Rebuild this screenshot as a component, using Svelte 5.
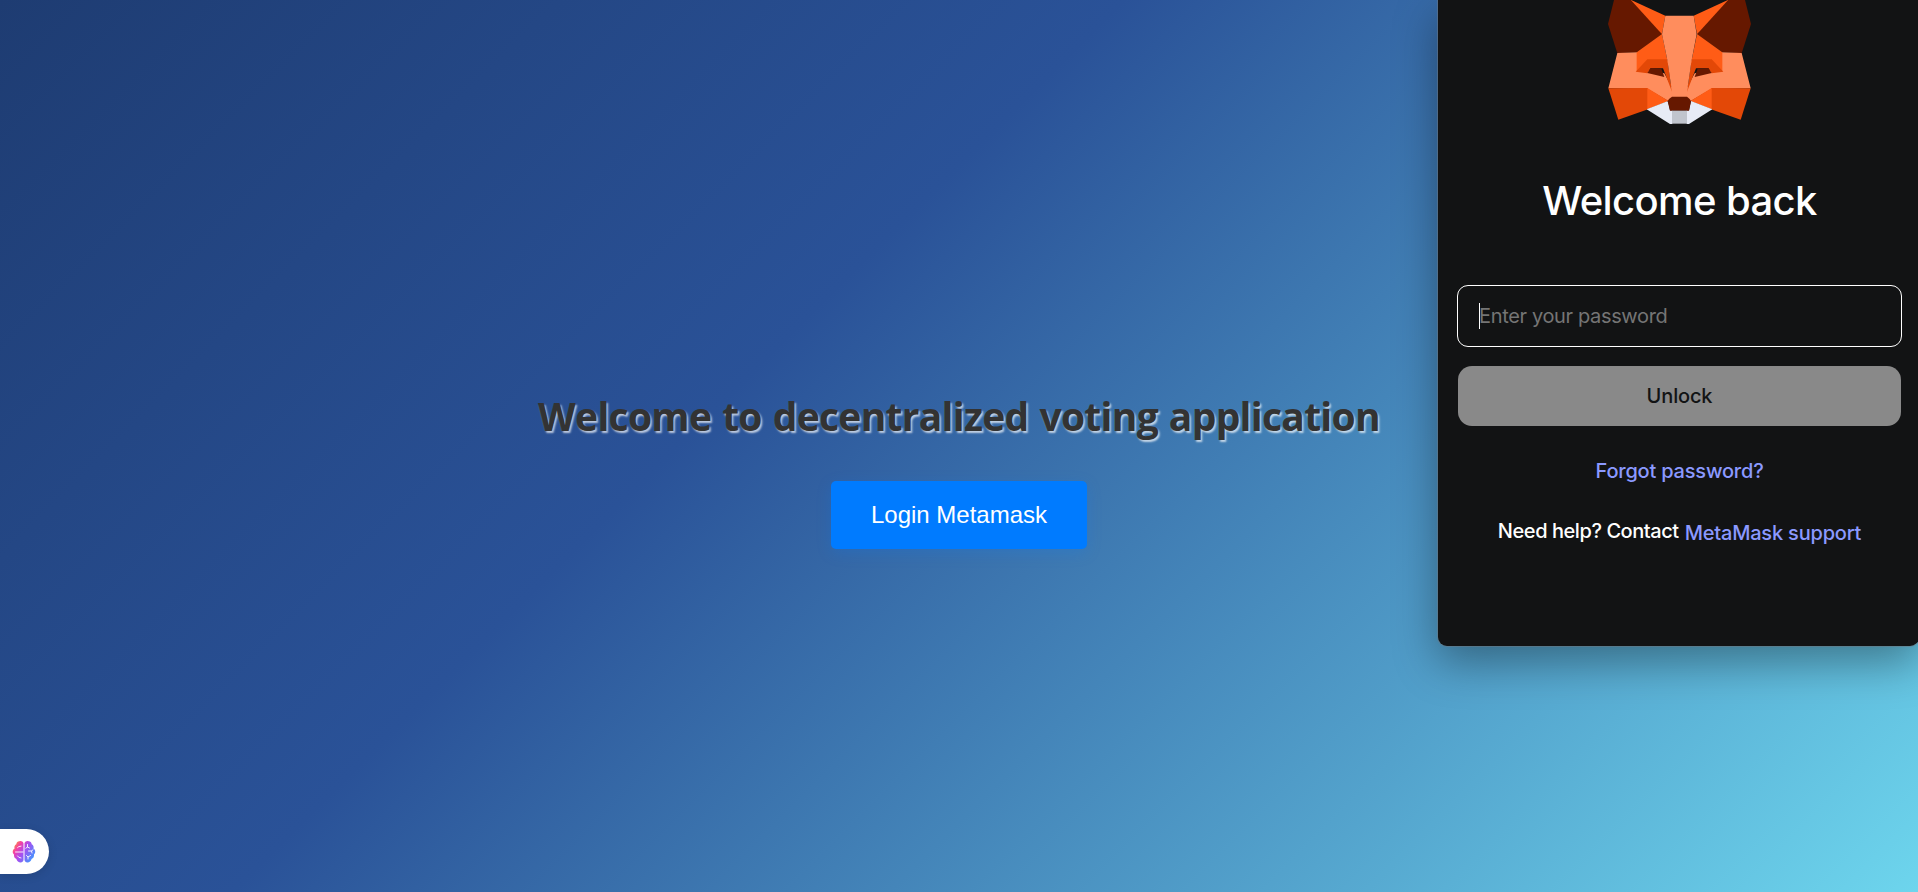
<script>
  let password = $state('');

  // Left half of the mask; the right half is its mirror image across x = 268.5.
  const half = [
    { fill: '#ff5c16', d: 'M119 -2 L226 47 L216 103 L119 20Z' },
    { fill: '#661800', d: 'M73 -4 L119 -4 L216 103 L140 157 L82 160 L54 72Z' },
    { fill: '#ff8d5d', d: 'M82 159 L141 157 L141 213 L172 210 L223 220 L250 270 L250 296 L236 304 L172 266 L55 265Z' },
    { fill: '#ff5c16', d: 'M216 102 L232 180 L236 190 L180 180 L140 214 L140 157Z' },
    { fill: '#e34807', d: 'M172 178 L232 178 L246 275 L219 205 L182 205 L172 220 L137 215Z' },
    { fill: '#661800', d: 'M182 204 L214 206 L223 231 L172 219Z' },
    { fill: '#e34807', d: 'M55 265 L174 264 L174 328 L85 359Z' },
    { fill: '#ff5c16', d: 'M172 264 L236 303 L172 328Z' },
    { fill: '#e7ebf6', d: 'M170 328 L234 303 L240 331 L247 331 L247 372 L240 372Z' },
  ];
</script>

<main class="page">
  <h1>Welcome to decentralized voting application</h1>
  <button class="login">Login Metamask</button>

  <aside class="assistant" aria-label="Assistant">
    <svg width="24" height="24" viewBox="0 0 24 24">
      <defs>
        <linearGradient id="brain" x1="0" y1="0.1" x2="1" y2="0.75">
          <stop offset="0" stop-color="#ffa81f" />
          <stop offset="0.25" stop-color="#f43fa6" />
          <stop offset="0.5" stop-color="#a94df0" />
          <stop offset="1" stop-color="#3b9bff" />
        </linearGradient>
      </defs>
      <path
        fill="url(#brain)"
        d="M11.500 3.200C11 1.500 8.800.700 7.500 1.300C6.200 1.100 4.400 2.200 4.300 4.200C2.500 5 2 7 2.600 8.500C.4 9.800.1 12.900 2 14.500C1.700 16.800 2.800 18.500 4.400 18.900C5 21.300 6.800 22.500 8.700 22.400C10.200 22.400 11.200 21.300 11.500 20Z M12.500 3.200C13 1.500 15.200.700 16.500 1.300C17.800 1.100 19.600 2.200 19.700 4.200C21.500 5 22 7 21.400 8.500C23.600 9.800 23.900 12.900 22 14.500C22.300 16.800 21.200 18.500 19.600 18.900C19 21.300 17.200 22.500 15.300 22.400C13.800 22.400 12.800 21.300 12.500 20Z"
      />
      <path
        fill="none"
        stroke="#fff"
        stroke-width="0.9"
        stroke-linecap="round"
        d="M5.500 7.500Q6.300 6.200 9 6.100 M3.500 12H11 M5.500 16Q6.500 18 9 18 M15.500 4.500V7L13.800 8.200 M15.500 7L17.500 8 M16.500 11H19.500L21 9.800 M19.500 11L20 13 M14.500 15.500L16 17L18.500 15.500 M16 17V19"
      />
    </svg>
  </aside>

  <section class="wallet">
    <svg class="fox" width="180" height="135" viewBox="0 0 540 405">
      {#each half as p}<path d={p.d} fill={p.fill} />{/each}
      <g transform="translate(537 0) scale(-1 1)">
        {#each half as p}<path d={p.d} fill={p.fill} />{/each}
      </g>
      <path fill="#ff8d5d" d="M226 47H311L320 103L305 180L291 275L292 292H245L246 275L232 180L216 103Z" />
      <path fill="#661800" d="M246 290H291L299 297L303 304L297 332H240L233 304L237 297Z" />
      <path fill="#c0c4cd" d="M246 332H291V371H246Z" />
    </svg>
    <h2>Welcome back</h2>
    <label class="field">
      <span class="caret"></span>
      <input type="password" placeholder="Enter your password" bind:value={password} />
    </label>
    <button class="unlock" disabled>Unlock</button>
    <a class="forgot" href="#forgot">Forgot password?</a>
    <p class="help"><span>Need help? Contact</span><a href="#support">MetaMask support</a></p>
  </section>
</main>

<style>
  :global(body) {
    margin: 0;
    overflow: hidden;
  }
  .page {
    position: relative;
    height: 892px;
    box-sizing: border-box;
    overflow: hidden;
    display: flex;
    flex-direction: column;
    align-items: center;
    justify-content: center;
    background: linear-gradient(135deg, #1e3c72, #2a5298 40%, #6dd5ed);
  }
  h1 {
    margin: 45px 0 38px;
    font: 700 39px/54px 'Open Sans', sans-serif;
    letter-spacing: -0.72px;
    word-spacing: 1.500px;
    color: #333;
    text-shadow: 1.500px 1.500px 2px rgba(255, 255, 255, 0.7);
    white-space: nowrap;
  }
  .login {
    width: 256px;
    height: 68px;
    padding: 0;
    border: 0;
    border-radius: 5px;
    background: #007bff;
    color: #fff;
    font: 24px 'Liberation Sans', Arial, sans-serif;
    box-shadow: 0 4px 15px rgba(0, 123, 255, 0.2);
  }
  .assistant {
    position: absolute;
    left: 0;
    top: 829px;
    width: 49px;
    height: 45px;
    box-sizing: border-box;
    padding: 10.500px 0 0 12px;
    border-radius: 0 22.500px 22.500px 0;
    background: #fff;
    box-shadow: 0 2px 10px rgba(0, 0, 0, 0.12);
  }
  .assistant svg {
    display: block;
  }
  .wallet {
    position: absolute;
    top: 0;
    right: -1px;
    width: 481px;
    height: 646px;
    box-sizing: border-box;
    padding: 0 17px 0 19px;
    border-radius: 0 0 9px 9px;
    background: #121314;
    box-shadow:
      0 0 0 1px rgba(110, 120, 130, 0.5),
      0 16px 44px rgba(0, 0, 0, 0.36);
    display: flex;
    flex-direction: column;
    align-items: center;
    font-family: Inter, sans-serif;
    color: #fff;
  }
  .fox {
    display: block;
    flex: none;
    margin-left: 1px;
  }
  h2 {
    margin: 41px 0 0;
    font-size: 40px;
    line-height: 50px;
    font-weight: 500;
    letter-spacing: -0.6px;
  }
  .field {
    align-self: stretch;
    height: 62px;
    box-sizing: border-box;
    margin-top: 59px;
    padding-left: 21px;
    border: 1px solid #fff;
    border-radius: 11px;
    display: flex;
    align-items: center;
  }
  .caret {
    width: 1px;
    height: 26px;
    background: #fff;
  }
  input {
    flex: 1;
    min-width: 0;
    padding: 0;
    margin-left: -1px;
    border: 0;
    outline: 0;
    background: none;
    color: #fff;
    font: 400 20px/26px Inter, sans-serif;
    letter-spacing: -0.35px;
  }
  input::placeholder {
    color: #757575;
    opacity: 1;
  }
  .unlock {
    align-self: stretch;
    height: 60px;
    margin: 19px 1px 0;
    padding: 0;
    border: 0;
    border-radius: 14px;
    background: #898989;
    color: #121314;
    font: 500 20px Inter, sans-serif;
    letter-spacing: -0.15px;
  }
  a {
    color: #8b99ff;
    text-decoration: none;
  }
  .forgot {
    margin-top: 31px;
    font-size: 20px;
    line-height: 28px;
    font-weight: 500;
    letter-spacing: -0.2px;
  }
  .help {
    margin: 32px 0 0;
    display: flex;
    gap: 6px;
    font-size: 20px;
    line-height: 28px;
    font-weight: 500;
    letter-spacing: -0.44px;
  }
  .help a {
    padding-top: 2px;
    letter-spacing: -0.2px;
  }
</style>
